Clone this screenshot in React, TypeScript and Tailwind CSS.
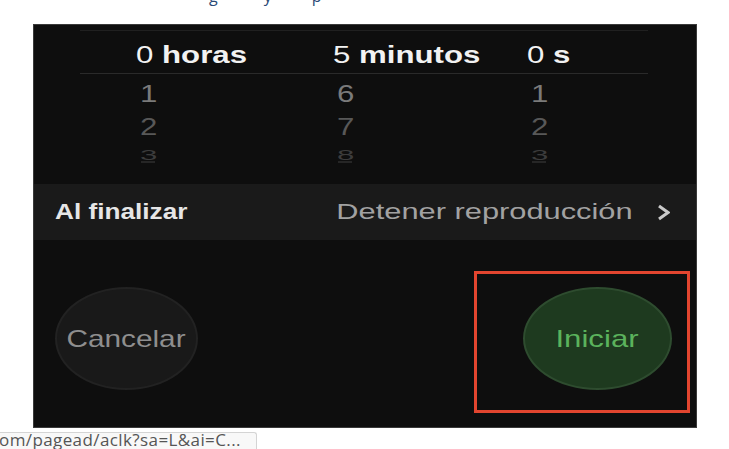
import { ReactNode } from "react";

const sans = "font-['Liberation_Sans',Arial,sans-serif]";

function Digit({ children, className }: { children: ReactNode; className: string }) {
  return <span className={`inline-block origin-left pl-[3px] ${className}`}>{children}</span>;
}

function WheelRow({ values, className, height }: { values: string[]; className: string; height: string }) {
  return (
    <div className={`grid grid-cols-[197px_194px_1fr] items-center pl-[102px] ${height}`}>
      {values.map((v, i) => (
        <div key={i}>
          <Digit className={className}>{v}</Digit>
        </div>
      ))}
    </div>
  );
}

export default function App() {
  return (
    <div className={`relative h-[449px] w-[729px] overflow-hidden bg-white ${sans}`}>
      {/* tail of the article text above the screenshot */}
      <div className="h-[24px] overflow-hidden font-['Open_Sans',sans-serif] text-[16px] leading-[16px] text-[#2b4a75]">
        <div className="-mt-[12px] flex">
          <span className="ml-[209px]">g</span>
          <span className="ml-[46px]">y</span>
          <span className="ml-[40px]">p</span>
        </div>
      </div>

      <div className="ml-[33px] flex h-[404px] w-[664px] flex-col border border-[#3a3a3a] bg-[#0e0e0e]">
        <div className="h-[5px]" />
        <div className="ml-[46px] mr-[48px] h-px bg-[#202020]" />

        <div className="grid h-[42px] grid-cols-[197px_194px_1fr] items-center pl-[102px] pt-[5px] text-[24px] leading-none text-[#f2f2f2]">
          <span className="inline-block origin-left scale-x-[1.3]">
            0 <b>horas</b>
          </span>
          <span className="inline-block origin-left scale-x-[1.3]">
            5 <b>minutos</b>
          </span>
          <span className="inline-block origin-left scale-x-[1.3]">
            0 <b>s</b>
          </span>
        </div>
        <div className="ml-[46px] mr-[48px] h-px bg-[#2a2a2a]" />

        <div className="flex h-[110px] flex-col pt-[3px] text-[24px] leading-none">
          <WheelRow values={["1", "6", "1"]} height="h-[33px]" className="scale-x-[1.3] text-[#7a7a7a]" />
          <WheelRow values={["2", "7", "2"]} height="h-[33px]" className="scale-x-[1.3] text-[#585858]" />
          <WheelRow
            values={["3", "8", "3"]}
            height="h-[16px]"
            className="scale-x-[1.3] scale-y-[0.6] text-[#3c3c3c]"
          />
          <div className="grid h-[6px] grid-cols-[197px_194px_1fr] items-center pl-[107px]">
            <div className="h-[2px] w-[14px] bg-[#262626]" />
            <div className="h-[2px] w-[14px] bg-[#262626]" />
            <div className="h-[2px] w-[14px] bg-[#262626]" />
          </div>
        </div>

        <div className="flex h-[56px] items-center bg-[#1a1a1a] pl-[21px] pr-[26px] text-[22px] leading-none">
          <span className="inline-block origin-left scale-x-[1.19] font-bold text-[#e6e6e6]">Al finalizar</span>
          <span className="ml-auto inline-block origin-right scale-x-[1.4] text-[#a2a2a2]">Detener reproducción</span>
          <svg width="13" height="17" viewBox="0 0 13 17" className="ml-[24px]">
            <polyline points="2,2 11,8.5 2,15" fill="none" stroke="#c9c9c9" strokeWidth="3" strokeLinejoin="miter" />
          </svg>
        </div>

        <div className="flex flex-1 items-start">
          <div className="ml-[21px] mt-[47px] flex h-[103px] w-[143px] items-center justify-center rounded-[50%] border-2 border-[#222] bg-[#191919]">
            <span className="inline-block scale-x-[1.24] text-[24px] leading-none text-[#8e8e8e]">Cancelar</span>
          </div>

          <div className="ml-auto mr-[6px] mt-[31px] flex h-[142px] w-[216px] items-start justify-end border-[3px] border-[#e2452f] pr-[15px] pt-[13px]">
            <div className="flex h-[103px] w-[149px] items-center justify-center rounded-[50%] border-2 border-[#2e4c2f] bg-[#1e3a1f]">
              <span className="inline-block scale-x-[1.3] text-[24px] leading-none text-[#5bb35c]">Iniciar</span>
            </div>
          </div>
        </div>
      </div>

      {/* browser status bubble */}
      <div className="absolute bottom-0 left-0 h-[17px] w-[257px] overflow-hidden rounded-tr-[3px] border-r border-t border-[#d4d4d4] bg-[#f8f8f8] font-['Open_Sans',sans-serif] text-[17px] leading-[14px] tracking-[0.4px] text-[#555]">
        <span className="-ml-[1px] whitespace-nowrap">om/pagead/aclk?sa=L&amp;ai=C...</span>
      </div>
    </div>
  );
}
